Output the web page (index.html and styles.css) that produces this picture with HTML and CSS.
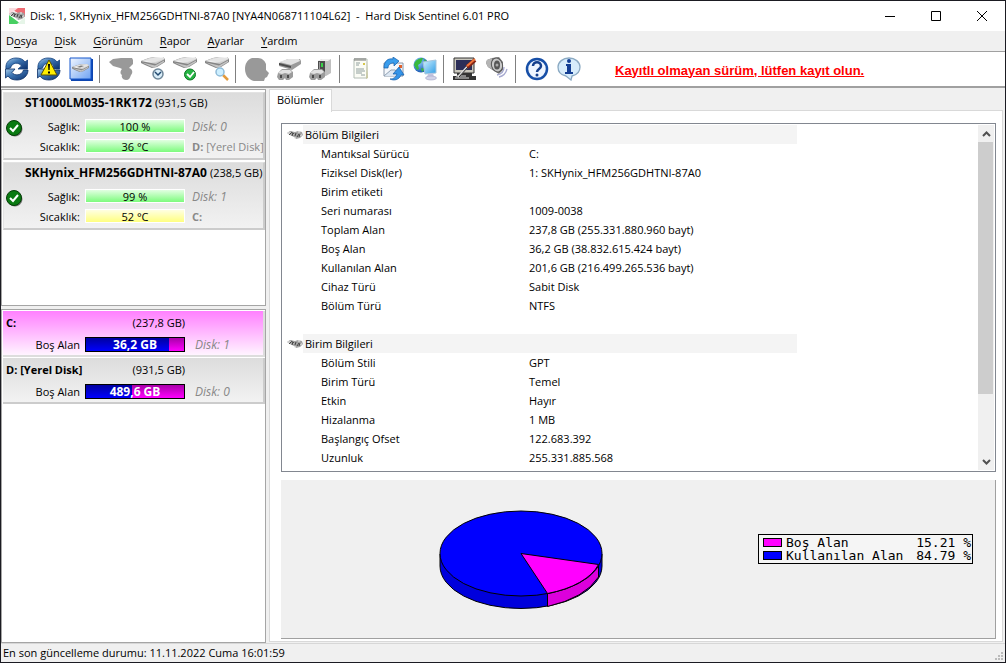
FILE: index.html
```html
<!DOCTYPE html>
<html lang="tr">
<head>
<meta charset="utf-8">
<title>Hard Disk Sentinel</title>
<link rel="stylesheet" href="styles.css">
</head>
<body>
<svg class="defs" aria-hidden="true">
  <defs>
    <linearGradient id="gMetal" x1="0" y1="0" x2="1" y2="1"><stop offset="0" stop-color="#a8a8a8"/><stop offset=".45" stop-color="#f6f6f6"/><stop offset="1" stop-color="#a4a4a4"/></linearGradient>
    <linearGradient id="gArrow" x1="0" y1="0" x2="1" y2="1"><stop offset="0" stop-color="#a9cdea"/><stop offset=".4" stop-color="#3f77b4"/><stop offset="1" stop-color="#0a2f6c"/></linearGradient>
    <linearGradient id="gBlue" x1="0" y1="0" x2="1" y2="1"><stop offset="0" stop-color="#f2f7ff"/><stop offset="1" stop-color="#6fa3f2"/></linearGradient>
    <linearGradient id="gScreen" x1="0" y1="0" x2="1" y2="1"><stop offset="0" stop-color="#d2f2ff"/><stop offset="1" stop-color="#2f9de6"/></linearGradient>
    <radialGradient id="gGlobe" cx=".35" cy=".3" r=".8"><stop offset="0" stop-color="#8fd0ff"/><stop offset="1" stop-color="#0c4ba8"/></radialGradient>
    <symbol id="drive" viewBox="0 0 24 12"><path d="M0 4 8 1l6-1h8l2 2v3l-8 5-5 1-7-3-4-2z" fill="#858585"/><path d="M0 4 8 1l6-1h8l2 2-9 5z" fill="url(#gMetal)"/><path d="M4 4 10 2l5-1h6l1 1-8 3z" fill="#e4e4e4"/><path d="M1 5.500l13 3 9-5v1.500l-8 5-3 .5z" fill="#c4c4c4"/></symbol>
    <symbol id="drive-small" viewBox="0 0 16 10"><path d="M0 3 3 1l5 1 3-1 4 1 1 3-3 3-4 1-2-2-4-2z" fill="#a2a2a2"/><path d="M1 3h3M5 4h2M11 2h2M13 5h2M7 8h2" stroke="#eee"/><path d="M2 5l2-2M5 6l1-3M8 6l1-3M10 7l2-3M12 7l1-3M4 2l3 2" stroke="#444" fill="none"/></symbol>
    <symbol id="cycle" viewBox="0 0 24 24"><path d="M1 12C0 5 5 1 11 1c4 0 7 1 9 4l2.500-2v9H13l3.500-3C14 5 7 5 5.500 11z" fill="url(#gArrow)" stroke="#123f7c" stroke-width=".8"/><path d="M23 13c0 6-5 10-11 10-4 0-7-1-9-4l-2.500 2v-9H10l-3 3.500C9 19 17 19 18.500 13z" fill="url(#gArrow)" stroke="#0b2f66" stroke-width=".8"/></symbol>
    <symbol id="plug" viewBox="0 0 16 11"><path d="M1 4 5 0h8l3 3v5l-4 3H9L8 9l-2 2H2l-2-3z" fill="#9c9c9c"/><path d="m1 4 4-3h8l2 2-3 2-4-1-3 1z" fill="#e2e2e2"/><path d="M3 6h2v3H3zM10 6h2v3h-2z" fill="#4a4a4a"/></symbol>
    <symbol id="ok" viewBox="0 0 17 17"><circle cx="9" cy="9" r="7.500" fill="#777"/><circle cx="8" cy="8" r="7.500" fill="#0a7a12" stroke="#053d08"/><path d="m4 8 3 3 5-6" fill="none" stroke="#fff" stroke-width="2"/></symbol>
  </defs>
</svg>
<div class="window">
  <header class="titlebar">
    <svg class="app-icon" viewBox="0 0 16 16"><path d="M0 0h16v9z" fill="#ee6b73"/><path d="M0 7v9h12z" fill="#48cf62"/><path d="M0 0h9L0 7z" fill="#f9dce0"/><path d="M8 16h8V9z" fill="#e6f5e8"/><use href="#drive-small" y="3" width="16" height="10"/></svg>
    <h1>Disk: 1, SKHynix_HFM256GDHTNI-87A0 [NYA4N068711104L62]&nbsp; -&nbsp; Hard Disk Sentinel 6.01 PRO</h1>
    <div class="controls">
      <button aria-label="Simge durumuna küçült"><svg viewBox="0 0 10 10"><path d="M0 5.500h10" /></svg></button>
      <button aria-label="Ekranı kapla"><svg viewBox="0 0 10 10"><path d="M.5.5h9v9h-9z"/></svg></button>
      <button aria-label="Kapat"><svg viewBox="0 0 10 10"><path d="m0 0 10 10M10 0 0 10"/></svg></button>
    </div>
  </header>
  <nav class="menu">
    <button>D<u>o</u>sya</button><button><u>D</u>isk</button><button><u>G</u>örünüm</button><button><u>R</u>apor</button><button><u>A</u>yarlar</button><button><u>Y</u>ardım</button>
  </nav>
  <div class="toolbar">
    <div class="group">
      <button aria-label="Yenile"><svg viewBox="0 0 24 24"><use href="#cycle" width="24" height="24"/></svg></button>
      <button aria-label="Uyarılar"><svg viewBox="0 0 24 24"><use href="#cycle" width="24" height="24"/><path d="M12 3 20 18H4z" fill="#ffee00" stroke="#5b5200" stroke-width="1"/><path d="M11 7h2l-.4 6h-1.200zM11 14.500h2v2h-2z" fill="#000"/></svg></button>
      <button aria-label="Disk görünümü"><svg viewBox="0 0 24 24"><path d="M2 2h22v22H2z" fill="#0d45b0"/><path d="M1 1h21v21H1z" fill="url(#gBlue)" stroke="#1557cc"/><use href="#drive" x="3" y="7" width="17" height="9"/><path d="m8 10 4-1.500 3 .5-4 1.500z" fill="#777"/></svg></button>
    </div>
    <div class="group">
      <button aria-label="Disk testi" disabled><svg viewBox="0 0 24 24"><path d="M0 5 4 2l8-1h11l1 2v4l-4 4c4 1 4 5 2 7-1 3-2 5-5 5s-5-3-4-5c-2-1-2-4 0-6l-2-1-7-2z" fill="#999"/></svg></button>
      <button aria-label="Disk süresi"><svg viewBox="0 0 24 24"><use href="#drive" width="24" height="12"/><circle cx="17" cy="17" r="5" fill="#d9edf8" stroke="#6f8799" stroke-width="1.500"/><path d="m14 15 3 3 3-3" fill="none" stroke="#234a70" stroke-width="1.500"/></svg></button>
      <button aria-label="Disk durumu"><svg viewBox="0 0 24 24"><use href="#drive" width="24" height="12"/><circle cx="17" cy="17.500" r="5.500" fill="#25b342" stroke="#117728"/><path d="m14 17 3 3 4-5" fill="none" stroke="#fff" stroke-width="1.800"/></svg></button>
      <button aria-label="Yüzey taraması"><svg viewBox="0 0 24 24"><use href="#drive" width="24" height="12"/><path d="m18 18 5 5" stroke="#e39a3c" stroke-width="2.500"/><circle cx="15" cy="15" r="4" fill="#cdefff" stroke="#8fbbd8" stroke-width="1.500"/></svg></button>
    </div>
    <div class="group">
      <button aria-label="Akustik" disabled><svg viewBox="0 0 24 24"><path d="M7 1h6c4 0 7 3 8 6v6l3 3-2 4-2 1-1 3H9c-5-1-9-6-9-12C0 7 2 3 7 1z" fill="#999"/></svg></button>
      <button aria-label="Aygıtı bağla"><svg viewBox="0 0 24 24"><path d="M2 6 11 2h12l1 2v3l-9 6-13-4z" fill="#9a9a9a"/><path d="m2 5 9-3h11l1 2-9 4z" fill="#e2e2e2"/><path d="m2 6 12 3v2L2 8z" fill="#4c4c4c"/><use href="#plug" x="0" y="12" width="16" height="11"/></svg></button>
      <button aria-label="Aygıtı çıkar"><svg viewBox="0 0 24 24"><path d="m9 4 4-2h9v14l-5 3H9z" fill="#c0c0c0"/><path d="m9 4 4-2h9l-3 2z" fill="#eee"/><path d="M9 4h7v12H9z" fill="#4c4c4c"/><path d="M12 6h2v4h-2z" fill="#36d247"/><path d="M10 5h1v9h-1z" fill="#999"/><use href="#plug" x="0" y="12" width="16" height="11"/></svg></button>
    </div>
    <div class="group">
      <button aria-label="Rapor"><svg viewBox="0 0 24 24"><path d="M5 2h13v19H5z" fill="#fbfcf5" stroke="#b3bdb5"/><path d="M6 1v3M8 1v3M10 1v3M12 1v3M14 1v3M16 1v3" stroke="#555" stroke-width=".8"/><path d="M7 6h4M7 8h3M7 12h8M7 14h9M7 16h6M12 18h4" stroke="#788" stroke-width=".8"/><path d="M14 6h2v2h-2z" fill="#d5c64b"/><path d="m18 4 1 17-2 1z" fill="#c8c8a0"/></svg></button>
      <button aria-label="Rapor gönder"><svg viewBox="0 0 24 24"><path d="M3 6h19v13H3z" fill="#f4f7fb" stroke="#8897aa"/><path d="m3 19 7-6h4l8 6" fill="#dce7f3" stroke="#90a0b2"/><path d="M18 8h3v3h-3z" fill="#e0622e"/><path d="M3 11C3 4 7 1 12 2V0l6 4-5 5V6C9 6 7 8 7 11z" fill="#3a9dec" stroke="#135ba9" stroke-width=".7"/><path d="M9 22c4 0 6-2 7-5h-4l6-7 5 8h-3c-2 5-7 6-11 4z" fill="#3494e8" stroke="#135ba9" stroke-width=".7"/></svg></button>
      <button aria-label="Ağ durumu"><svg viewBox="0 0 24 24"><circle cx="8" cy="8" r="7.500" fill="url(#gGlobe)"/><path d="M1 8c1-5 5-7 9-7l-2 5-3 2 1 4-2 1zM8 11l4 1-3 3zM11 2l4 3-3 2z" fill="#39b93d"/><path d="m10 5 13-2v13l-11 1z" fill="url(#gScreen)" stroke="#a5c4dc"/><path d="m15 17 5-1 1 4h-7z" fill="#c4c5e0"/><ellipse cx="18" cy="21" rx="5.500" ry="2" fill="#d0d2e8" stroke="#a5a6c6" stroke-width=".6"/></svg></button>
    </div>
    <div class="group">
      <button aria-label="Yapılandırma"><svg viewBox="0 0 24 24"><path d="M1 1h20v15H1z" fill="#c9c7bd" stroke="#343434"/><path d="M3 3h16v10H3z" fill="#2c2e58"/><path d="M4 16h15v3h4v4H0v-4h4z" fill="#333"/><path d="M3 19h10M2 21h14" stroke="#ddd"/><path d="M5 20 15 9" stroke="#ddd" stroke-width="2"/><path d="m6 20 9-10" stroke="#222"/><path d="m14 10 8-7" stroke="#852314" stroke-width="4"/><path d="m14 9 8-7" stroke="#f0763c" stroke-width="2"/></svg></button>
      <button aria-label="Sesli uyarı"><svg viewBox="0 0 24 24"><path d="m2 3 5-2 7-1 4 5v8l-4 4-5-3-6-4-2-4z" fill="#7c7c7c"/><path d="m2 3 5-2v11l-4-2-2-4z" fill="#b5b5b5"/><ellipse cx="12" cy="8" rx="5.500" ry="7" fill="#c9c9c9" stroke="#555" transform="rotate(-18 12 8)"/><ellipse cx="12" cy="8" rx="3" ry="4.500" fill="#555"/><circle cx="12" cy="8" r="1.500" fill="#aaa"/><path d="M12 18c5-1 7-4 7-8M14 20c5-1 7-4 8-8" fill="none" stroke="#a6a9cf" stroke-width="1.300"/></svg></button>
    </div>
    <div class="group">
      <button aria-label="Yardım"><svg viewBox="0 0 24 24"><circle cx="12" cy="12" r="10" fill="#eef5ff" stroke="#174fa7" stroke-width="2.500"/><path d="M8 9c0-5 8-5 8 0 0 3-4 3-4 6" fill="none" stroke="#153f8c" stroke-width="2.500"/><circle cx="12" cy="18" r="1.500" fill="#153f8c"/></svg></button>
      <button aria-label="Bilgi"><svg viewBox="0 0 24 24"><path d="M12 1c6 0 11 4 11 9s-4 8-8 9l-1 4-5-4c-5-1-8-4-8-9s5-9 11-9z" fill="#d7ecfb" stroke="#8aa9c2" stroke-width="1.300"/><circle cx="12" cy="4" r="2" fill="#143f94"/><path d="M9 7h5v8h2v2H8v-2h2V9H9z" fill="#143f94"/></svg></button>
    </div>
    <a class="register" href="#register">Kayıtlı olmayan sürüm, lütfen kayıt olun.</a>
  </div>
  <main class="body">
    <aside class="side">
      <section class="list disks">
        <article class="disk">
          <svg class="status"><use href="#ok"/></svg>
          <h2>ST1000LM035-1RK172 <span>(931,5 GB)</span></h2>
          <div class="stat"><span class="label">Sağlık:</span><span class="bar good">100 %</span><i>Disk: 0</i></div>
          <div class="stat"><span class="label">Sıcaklık:</span><span class="bar good">36 °C</span><span class="vol"><b>D:</b> [Yerel Disk]</span></div>
        </article>
        <article class="disk">
          <svg class="status"><use href="#ok"/></svg>
          <h2>SKHynix_HFM256GDHTNI-87A0 <span>(238,5 GB)</span></h2>
          <div class="stat"><span class="label">Sağlık:</span><span class="bar good">99 %</span><i>Disk: 1</i></div>
          <div class="stat"><span class="label">Sıcaklık:</span><span class="bar warm">52 °C</span><span class="vol"><b>C:</b></span></div>
        </article>
      </section>
      <section class="list volumes">
        <article class="volume selected">
          <div class="head"><h2>C:</h2><span>(237,8 GB)</span></div>
          <div class="stat"><span class="label">Boş Alan</span><span class="space"><span class="used" style="width:85%"></span><b>36,2 GB</b></span><i>Disk: 1</i></div>
        </article>
        <article class="volume">
          <div class="head"><h2>D: [Yerel Disk]</h2><span>(931,5 GB)</span></div>
          <div class="stat"><span class="label">Boş Alan</span><span class="space"><span class="used" style="width:47%"></span><b>489,6 GB</b></span><i>Disk: 0</i></div>
        </article>
      </section>
    </aside>
    <section class="content">
      <div class="tabs"><button class="tab">Bölümler</button></div>
      <div class="page">
        <div class="details">
          <div class="rows">
            <table>
              <colgroup><col class="c-icon"><col class="c-name"><col class="c-value"></colgroup>
              <tbody>
              <tr class="title"><td><svg><use href="#drive-small"/></svg></td><th colspan="2">Bölüm Bilgileri</th></tr>
              <tr><td></td><th>Mantıksal Sürücü</th><td>C:</td></tr>
              <tr><td></td><th>Fiziksel Disk(ler)</th><td>1: SKHynix_HFM256GDHTNI-87A0</td></tr>
              <tr><td></td><th>Birim etiketi</th><td></td></tr>
              <tr><td></td><th>Seri numarası</th><td>1009-0038</td></tr>
              <tr><td></td><th>Toplam Alan</th><td>237,8 GB (255.331.880.960 bayt)</td></tr>
              <tr><td></td><th>Boş Alan</th><td>36,2 GB (38.832.615.424 bayt)</td></tr>
              <tr><td></td><th>Kullanılan Alan</th><td>201,6 GB (216.499.265.536 bayt)</td></tr>
              <tr><td></td><th>Cihaz Türü</th><td>Sabit Disk</td></tr>
              <tr><td></td><th>Bölüm Türü</th><td>NTFS</td></tr>
              <tr><td colspan="3"></td></tr>
              <tr class="title"><td><svg><use href="#drive-small"/></svg></td><th colspan="2">Birim Bilgileri</th></tr>
              <tr><td></td><th>Bölüm Stili</th><td>GPT</td></tr>
              <tr><td></td><th>Birim Türü</th><td>Temel</td></tr>
              <tr><td></td><th>Etkin</th><td>Hayır</td></tr>
              <tr><td></td><th>Hizalanma</th><td>1 MB</td></tr>
              <tr><td></td><th>Başlangıç Ofset</th><td>122.683.392</td></tr>
              <tr><td></td><th>Uzunluk</th><td>255.331.885.568</td></tr>
              </tbody>
            </table>
          </div>
          <div class="scroll">
            <button aria-label="Yukarı"><svg viewBox="0 0 9 6"><path d="m1 5 3.500-3.500L8 5"/></svg></button>
            <div class="track"><div class="thumb"></div></div>
            <button aria-label="Aşağı"><svg viewBox="0 0 9 6"><path d="m1 1 3.500 3.500L8 1"/></svg></button>
          </div>
        </div>
        <div class="chart">
          <div class="plot">
            <svg class="pie" viewBox="0 0 164 100">
              <path d="M1 44v12a81 42.500 0 0 0 162 0V44z" fill="#0000dc" stroke="#000"/>
              <path d="M108.500 84v12.500Q146 88 159.500 67V55z" fill="#dc00dc" stroke="#000"/>
              <ellipse cx="82" cy="43.500" rx="81" ry="42.500" fill="#00f" stroke="#000"/>
              <path d="M82 43.500 159.500 54.500A81 42.500 0 0 1 108.500 83.500z" fill="#f0f" stroke="#000"/>
            </svg>
          </div>
          <div class="legend">
            <div class="key"><span class="swatch free"></span><span class="name">Boş Alan</span><span>15.21 %</span></div>
            <div class="key"><span class="swatch full"></span><span class="name">Kullanılan Alan</span><span>84.79 %</span></div>
          </div>
        </div>
      </div>
    </section>
  </main>
  <footer class="statusbar"><span>En son güncelleme durumu: 11.11.2022 Cuma 16:01:59</span>
    <svg class="grip" viewBox="0 0 8 8"><path d="M6 0h2v2H6zM6 3h2v2H6zM3 3h2v2H3zM6 6h2v2H6zM3 6h2v2H3zM0 6h2v2H0z" fill="#bbb"/></svg>
  </footer>
</div>
</body>
</html>
```
FILE: styles.css
```css
* { box-sizing: border-box; }
body { margin: 0; font: 11px/19px "Open Sans", "Noto Sans", sans-serif; color: #000; }
button { font: inherit; color: inherit; border: 0; padding: 0; background: none; }
h1, h2 { margin: 0; font-size: inherit; }
svg { display: block; }
.defs { position: absolute; width: 0; height: 0; }
.window { display: flex; flex-direction: column; height: 100vh; border: 1px solid #1b1b22; background: #f0f0f0; overflow: hidden; }

.titlebar { display: flex; align-items: center; height: 30px; padding-left: 8px; background: #fff; flex: none; }
.app-icon { width: 16px; height: 16px; }
.titlebar h1 { flex: 1; margin-left: 5px; padding-bottom: 2px; font-weight: 400; white-space: nowrap; }
.controls { display: flex; }
.controls button { width: 46px; height: 29px; display: grid; place-items: center; }
.controls svg { width: 10px; height: 10px; fill: none; stroke: #000; }

.menu { display: flex; gap: 17px; height: 20px; padding: 0 5px 2px; flex: none; }
.menu u { text-underline-offset: 2px; }

.toolbar { display: flex; align-items: center; height: 37px; background: #fff; border-top: 1px solid #a0a0a0; border-bottom: 2px solid #a0a0a0; flex: none; }
.group { display: flex; }
.group + .group { margin-left: 2px; padding-left: 5px; border-left: 1px solid #808080; }
.group button { width: 32px; height: 28px; display: grid; place-items: center; }
.group svg { width: 24px; height: 24px; }
.register { margin: 3px 0 0 30px; font: bold 13px/16px "Liberation Sans", sans-serif; color: #f00; white-space: nowrap; }

.body { display: flex; flex: 1; min-height: 0; gap: 3px; padding-top: 1px; }
.side { display: flex; flex-direction: column; gap: 3px; flex: 0 0 265px; min-width: 0; }
.list { background: #fff; border: 1px solid #a5a5a5; overflow: hidden; padding: 1px 0 1px 1px; }
.disks { flex: 0 0 217px; padding-top: 2px; }
.volumes { flex: 1; }
.disk { position: relative; height: 68px; margin-bottom: 2px; padding: 1px 0; background: linear-gradient(#dcdcdc, #f2f2f2); border: 1px solid #e3e3e3; border-width: 1px 2px 2px 1px; border-right-color: #ccc; border-bottom-color: #ccc; overflow: hidden; }
.status { position: absolute; left: 2px; top: 27px; width: 17px; height: 17px; }
.disk h2 { padding-left: 21px; font-size: 12px; line-height: 18px; white-space: nowrap; }
.disk h2 span { font-size: 11px; font-weight: 400; }
.stat { display: grid; grid-template-columns: 76px 100px 1fr; column-gap: 5px; align-items: center; height: 20px; white-space: nowrap; }
.disk h2 + .stat { margin-top: 4px; }
.label { text-align: right; }
.stat i, .vol { color: #888; margin-left: 2px; }
.stat i { font-size: 12px; }
.bar { height: 14px; border: 1px solid #fff; line-height: 14px; text-align: center; }
.good { background: linear-gradient(#e2ffe2, #7dfb7d); }
.warm { background: linear-gradient(#ffffe2, #ffff80); }
.volume { height: 46px; margin-bottom: 1px; padding-top: 1px; background: linear-gradient(#dcdcdc, #f2f2f2); border: 1px solid #e3e3e3; border-width: 0 2px 2px 0; border-right-color: #ccc; border-bottom-color: #ccc; }
.selected { background: linear-gradient(#ff80ff, #fff4ff); border-color: #ddd; }
.head { display: flex; justify-content: space-between; width: 182px; padding-left: 3px; height: 22px; line-height: 22px; }
.volume .stat { grid-template-columns: 77px 100px 1fr; }
.volume i { margin-left: 5px; }
.space { position: relative; height: 15px; border: 1px solid #000; background: linear-gradient(#a800a8, #f0f); color: #fff; line-height: 14px; text-align: center; }
.used { position: absolute; inset: 0 auto 0 0; background: linear-gradient(#0000a0, #00f); }
.space b { position: relative; font-size: 12px; }

.content { display: flex; flex-direction: column; flex: 1; min-width: 0; padding: 0 2px 1px 0; }
.tabs { display: flex; height: 22px; margin-bottom: -1px; }
.tab { padding: 0 7px 3px; height: 23px; background: #fff; border: 1px solid #d9d9d9; border-bottom: 0; z-index: 1; }
.page { display: flex; flex-direction: column; gap: 8px; flex: 1; min-height: 0; padding: 12px 6px 2px 11px; background: #fff; border: 1px solid #d9d9d9; }
.details { display: flex; flex: 1; min-height: 0; padding: 1px; border: 1px solid #828790; }
.rows { flex: 1; overflow: hidden; }
table { width: 514px; border-collapse: collapse; table-layout: fixed; }
.c-icon { width: 20px; }
.c-name { width: 226px; }
td, th { height: 19px; padding: 0; font-weight: 400; text-align: left; line-height: 19px; }
th { padding-left: 18px; }
.title th { background: #f4f4f4; padding-left: 2px; }
.title svg { width: 16px; height: 10px; margin-left: 4px; }
.scroll { display: flex; flex-direction: column; width: 16px; background: #f0f0f0; }
.scroll button { height: 17px; display: grid; place-items: center; }
.scroll svg { width: 9px; height: 6px; fill: none; stroke: #505050; stroke-width: 2; }
.track { flex: 1; }
.thumb { height: 81%; width: 15px; background: #cdcdcd; }
.chart { display: flex; align-items: center; flex: 0 0 159px; padding-right: 22px; background: #f0f0f0; border-right: 1px solid #a0a0a0; border-bottom: 1px solid #a0a0a0; }
.plot { flex: 1; display: grid; justify-content: center; padding: 1px 0 0 3px; }
.pie { width: 164px; height: 100px; }
.legend { width: 215px; margin-bottom: 20px; padding: 1px; border: 1px solid #000; background: #f5f5f5; font: 13px/13px "DejaVu Sans Mono", monospace; }
.key { display: flex; align-items: center; gap: 4px; padding-left: 3px; }
.swatch { width: 19px; height: 9px; border: 1px solid #000; }
.name { flex: 1; }
.free { background: #f0f; }
.full { background: #00f; }

.statusbar { display: flex; justify-content: space-between; align-items: flex-end; height: 19px; padding: 0 2px; border-top: 1px solid #d7d7d7; flex: none; }
.grip { width: 8px; height: 8px; margin-bottom: 2px; }
```
